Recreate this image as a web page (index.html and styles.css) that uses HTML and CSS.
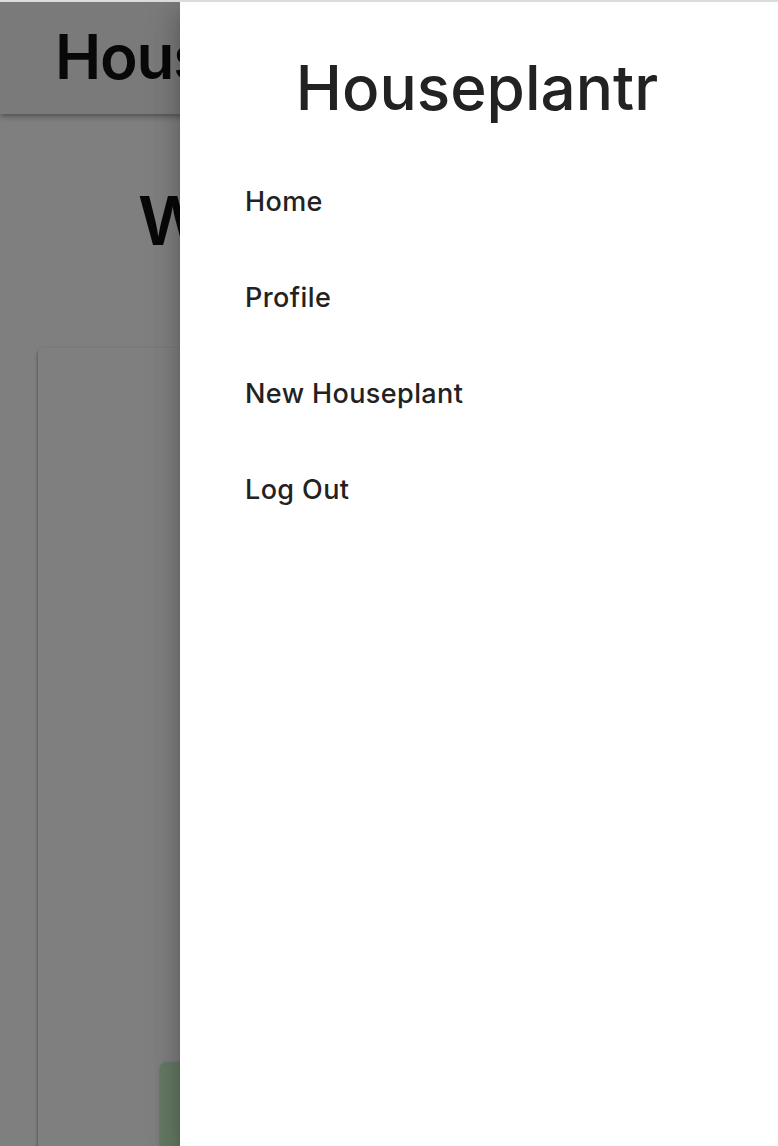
FILE: index.html
```html
<!DOCTYPE html>
<html lang="en">
<head>
<meta charset="utf-8">
<title>Houseplantr</title>
<link rel="stylesheet" href="styles.css">
</head>
<body>
<div class="chrome-line"></div>
<div class="screen">
  <div class="page">
    <header class="appbar">
      <span class="appbar-title">Houseplantr</span>
    </header>
    <main class="content">
      <h1 class="welcome">Welcome back!</h1>
      <section class="card">
        <div class="card-body"></div>
        <div class="card-actions">
          <button class="btn-green" type="button">Add a plant</button>
        </div>
      </section>
    </main>
  </div>
  <div class="backdrop"></div>
  <nav class="drawer">
    <h2 class="drawer-title">Houseplantr</h2>
    <ul class="drawer-list">
      <li><a class="drawer-link" href="#">Home</a></li>
      <li><a class="drawer-link" href="#">Profile</a></li>
      <li><a class="drawer-link" href="#">New Houseplant</a></li>
      <li><a class="drawer-link" href="#">Log Out</a></li>
    </ul>
  </nav>
</div>
</body>
</html>
```

FILE: styles.css
```css
* { box-sizing: border-box; }
html, body {
  margin: 0;
  padding: 0;
  height: 100%;
  overflow: hidden;
}
body {
  font-family: Inter, "Noto Sans", sans-serif;
  color: #1f1f1f;
  background: #fff;
  display: flex;
  flex-direction: column;
}
.chrome-line {
  height: 2px;
  background: #dcdcdc;
  flex: none;
  position: relative;
  z-index: 10;
}
.screen {
  position: relative;
  flex: 1;
  overflow: hidden;
}
.page {
  height: 100%;
  display: flex;
  flex-direction: column;
}
.appbar {
  height: 112px;
  background: #f4f4f4;
  box-shadow: 0 2px 4px -1px rgba(0,0,0,.2), 0 4px 5px 0 rgba(0,0,0,.14), 0 1px 10px 0 rgba(0,0,0,.12);
  display: flex;
  align-items: center;
  padding-left: 55px;
  padding-bottom: 4px;
  flex: none;
  position: relative;
  z-index: 1;
}
.appbar-title {
  font-size: 62px;
  font-weight: 600;
  color: #111;
  letter-spacing: -1.2px;
}
.content {
  flex: 1;
  padding: 0 0 0 38px;
  display: flex;
  flex-direction: column;
}
.welcome {
  margin: 66px 0 0 100px;
  font-size: 68px;
  font-weight: 600;
  color: #111;
  line-height: 80px;
  white-space: nowrap;
}
.card {
  margin-top: 88px;
  width: 680px;
  flex: none;
  background: #fff;
  border-radius: 5px;
  box-shadow: -1px 2px 3px 0 rgba(0,0,0,.2), 0 1px 1px 0 rgba(0,0,0,.14), 0 1px 4px 0 rgba(0,0,0,.14);
  display: flex;
  flex-direction: column;
}
.card-body { height: 714px; }
.card-actions { padding: 0 0 40px 122px; }
.btn-green {
  width: 300px;
  height: 100px;
  border: 0;
  border-radius: 6px;
  background: #c8f4c8;
  font: 500 20px Inter, sans-serif;
  box-shadow: 0 3px 1px -2px rgba(0,0,0,.2), 0 2px 2px 0 rgba(0,0,0,.14), 0 1px 5px 0 rgba(0,0,0,.12);
}
.backdrop {
  position: absolute;
  inset: 0;
  background: rgba(0,0,0,.5);
  z-index: 2;
}
.drawer {
  position: absolute;
  top: 0;
  bottom: 0;
  left: 180px;
  right: 0;
  background: #fff;
  z-index: 3;
  box-shadow: 0 8px 10px -5px rgba(0,0,0,.2), 0 16px 24px 2px rgba(0,0,0,.14), 0 6px 30px 5px rgba(0,0,0,.12);
  display: flex;
  flex-direction: column;
}
.drawer-title {
  margin: 50px 0 0;
  text-align: center;
  font-size: 62px;
  font-weight: 500;
  line-height: 72px;
  color: #222;
  padding-right: 4px;
}
.drawer-list {
  list-style: none;
  margin: 63px 0 0;
  padding: 0;
}
.drawer-list li {
  height: 96px;
  display: flex;
  align-items: flex-start;
}
.drawer-link {
  padding-left: 65px;
  font-size: 27px;
  font-weight: 500;
  color: #222;
  text-decoration: none;
  line-height: 30px;
  letter-spacing: 0.4px;
}
```
